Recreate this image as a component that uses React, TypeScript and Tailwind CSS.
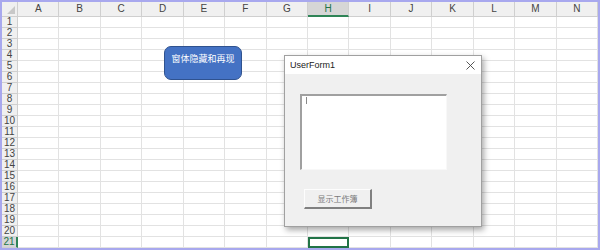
import React from 'react';

const COLS = ['A', 'B', 'C', 'D', 'E', 'F', 'G', 'H', 'I', 'J', 'K', 'L', 'M', 'N'];
const ROWS = Array.from({ length: 21 }, (_, i) => i + 1);

export default function App() {
  return (
    <div className="w-[600px] h-[250px] border-2 border-[#a8a8ee] relative overflow-hidden bg-white font-['Liberation_Sans','Noto_Sans_CJK_SC',sans-serif]">
      {/* Sheet grid */}
      <div className="grid grid-cols-[16px_repeat(14,1fr)] grid-rows-[15px_repeat(21,11px)] w-full">
        <div className="bg-[#f0f0f0] border-r border-b border-[#cfcfcf] flex items-end justify-end pr-[2px] pb-[2px]">
          <svg width="8" height="8" viewBox="0 0 8 8">
            <polygon points="8,0 8,8 0,8" fill="#c8c8c8" />
          </svg>
        </div>
        {COLS.map((c) => (
          <div
            key={c}
            className={
              c === 'H'
                ? 'bg-[#d6d6d6] border-r border-[#cfcfcf] border-b-2 border-b-[#2f8456] text-[#217346] text-[10px] leading-none flex items-center justify-center'
                : 'bg-[#f0f0f0] border-r border-b border-[#cfcfcf] text-[#444] text-[10px] leading-none flex items-center justify-center'
            }
          >
            {c}
          </div>
        ))}
        {ROWS.map((r) => (
          <React.Fragment key={r}>
            <div
              className={
                r === 21
                  ? 'bg-[#d6d6d6] border-r-2 border-r-[#2f8456] border-b border-[#cfcfcf] text-[#217346] text-[10px] leading-none flex items-center justify-center'
                  : 'bg-[#f0f0f0] border-r border-b border-[#cfcfcf] text-[#444] text-[10px] leading-none flex items-center justify-center'
              }
            >
              {r}
            </div>
            {COLS.map((c) => (
              <div
                key={c}
                className={
                  r === 21 && c === 'H'
                    ? 'border-2 border-[#217346]'
                    : 'border-r border-b border-[#e2e2e2]'
                }
              />
            ))}
          </React.Fragment>
        ))}
      </div>

      {/* Shape button */}
      <div className="absolute left-[162px] top-[44px] w-[78px] h-[34px] rounded-[7px] bg-[#4472c4] border border-[#2f528f] text-white text-[9px] leading-none text-center pt-[7px] font-['Noto_Sans_CJK_SC',sans-serif]">
        窗体隐藏和再现
      </div>

      {/* UserForm */}
      <div className="absolute left-[282px] top-[53px] w-[198px] h-[172px] bg-[#f0f0f0] border border-[#a0a0a0] shadow-[2px_3px_6px_rgba(0,0,0,0.35)] flex flex-col">
        <div className="h-[18px] bg-white flex items-center justify-between pl-[5px] pr-[6px]">
          <span className="text-[9px] text-[#222] leading-none">UserForm1</span>
          <svg width="9" height="9" viewBox="0 0 9 9">
            <path d="M0.5 0.5 L8.5 8.5 M8.5 0.5 L0.5 8.5" stroke="#444" strokeWidth="0.9" fill="none" />
          </svg>
        </div>
        <div className="flex-1 pl-[15px] pt-[20px] flex flex-col">
          <div className="w-[147px] h-[76px] bg-white border-t-2 border-l-2 border-[#a0a0a0] border-r border-b border-r-[#f8f8f8] border-b-[#f8f8f8] pl-[4px] pt-[1px]">
            <div className="w-px h-[7px] bg-[#888]" />
          </div>
          <div className="ml-[4px] mt-[19px] w-[68px] h-[20px] bg-[#f0f0f0] border-t border-l border-[#fdfdfd] border-r-2 border-b-2 border-r-[#808080] border-b-[#808080] flex items-center justify-center text-[8px] text-[#7a7a7a] font-['Noto_Sans_CJK_SC',serif]">
            显示工作簿
          </div>
        </div>
      </div>
    </div>
  );
}
